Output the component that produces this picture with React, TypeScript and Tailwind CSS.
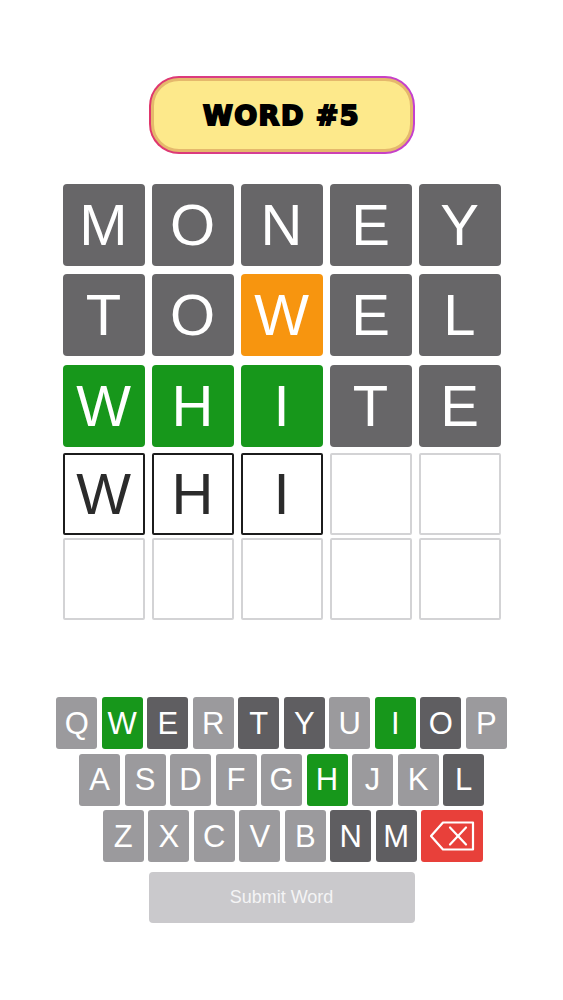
import React from 'react';

type TileState = 'gray' | 'orange' | 'green' | 'typed' | 'empty';
type KeyState = 'light' | 'dark' | 'green';

const board: { letter: string; state: TileState }[][] = [
  [
    { letter: 'M', state: 'gray' },
    { letter: 'O', state: 'gray' },
    { letter: 'N', state: 'gray' },
    { letter: 'E', state: 'gray' },
    { letter: 'Y', state: 'gray' },
  ],
  [
    { letter: 'T', state: 'gray' },
    { letter: 'O', state: 'gray' },
    { letter: 'W', state: 'orange' },
    { letter: 'E', state: 'gray' },
    { letter: 'L', state: 'gray' },
  ],
  [
    { letter: 'W', state: 'green' },
    { letter: 'H', state: 'green' },
    { letter: 'I', state: 'green' },
    { letter: 'T', state: 'gray' },
    { letter: 'E', state: 'gray' },
  ],
  [
    { letter: 'W', state: 'typed' },
    { letter: 'H', state: 'typed' },
    { letter: 'I', state: 'typed' },
    { letter: '', state: 'empty' },
    { letter: '', state: 'empty' },
  ],
  [
    { letter: '', state: 'empty' },
    { letter: '', state: 'empty' },
    { letter: '', state: 'empty' },
    { letter: '', state: 'empty' },
    { letter: '', state: 'empty' },
  ],
];

// row offsets copied from the screenshot, the gaps aren't even
const rowMargins = ['mt-0', 'mt-[8px]', 'mt-[9px]', 'mt-[6px]', 'mt-[3px]'];

const tileClass: Record<TileState, string> = {
  gray: 'bg-[#676668] text-white rounded-[4px]',
  orange: 'bg-[#f7950f] text-white rounded-[4px]',
  green: 'bg-[#17971b] text-white rounded-[4px]',
  typed: 'bg-white text-[#2b2b2b] border-2 border-[#1c1c1c] rounded-[2px]',
  empty: 'bg-white border-2 border-[#d3d3d5] rounded-[2px]',
};

const keyRows: [string, KeyState][][] = [
  [
    ['Q', 'light'],
    ['W', 'green'],
    ['E', 'dark'],
    ['R', 'light'],
    ['T', 'dark'],
    ['Y', 'dark'],
    ['U', 'light'],
    ['I', 'green'],
    ['O', 'dark'],
    ['P', 'light'],
  ],
  [
    ['A', 'light'],
    ['S', 'light'],
    ['D', 'light'],
    ['F', 'light'],
    ['G', 'light'],
    ['H', 'green'],
    ['J', 'light'],
    ['K', 'light'],
    ['L', 'dark'],
  ],
  [
    ['Z', 'light'],
    ['X', 'light'],
    ['C', 'light'],
    ['V', 'light'],
    ['B', 'light'],
    ['N', 'dark'],
    ['M', 'dark'],
  ],
];

const keyClass: Record<KeyState, string> = {
  light: 'bg-[#9b9a9d]',
  dark: 'bg-[#5f5e61]',
  green: 'bg-[#17971b]',
};

function Key({ label, state }: { label: string; state: KeyState }) {
  return (
    <div
      className={`flex h-[52px] w-[41px] items-center justify-center rounded-[3px] text-[31px] leading-none text-white ${keyClass[state]}`}
    >
      {label}
    </div>
  );
}

function BackspaceKey() {
  return (
    <div className="flex h-[52px] w-[62px] items-center justify-center rounded-[3px] bg-[#e8403a]">
      <svg width="46" height="30" viewBox="0 0 46 30" fill="none" stroke="white" strokeWidth="2.2" strokeLinejoin="round">
        <polygon points="14,1.5 44,1.5 44,28.5 14,28.5 2,15" />
        <line x1="21" y1="6.5" x2="37" y2="23.5" strokeLinecap="round" />
        <line x1="37" y1="6.5" x2="21" y2="23.5" strokeLinecap="round" />
      </svg>
    </div>
  );
}

export default function App() {
  return (
    <div className="min-h-[1000px] w-full bg-white pt-[76px] font-['Liberation_Sans',Arial,sans-serif]">
      {/* title badge */}
      <div className="flex justify-center">
        <div className="h-[78px] w-[266px] rounded-[30px] bg-gradient-to-r from-[#e0366b] to-[#c43fd0] p-[2px]">
          <div className="flex h-full w-full items-center justify-center rounded-[28px] border-[3px] border-[#e5b86c] bg-[#fde98b]">
            <span className="font-['DejaVu_Sans',sans-serif] text-[27px] font-black leading-none tracking-[1.5px] text-black [-webkit-text-stroke:2px_black]">
              WORD #5
            </span>
          </div>
        </div>
      </div>

      {/* board */}
      <div className="mt-[30px] flex flex-col items-center">
        {board.map((row, r) => (
          <div key={r} className={`flex gap-[7px] ${rowMargins[r]}`}>
            {row.map((tile, c) => (
              <div
                key={c}
                className={`flex h-[82px] w-[82px] items-center justify-center text-[58px] leading-none ${tileClass[tile.state]}`}
              >
                {tile.letter}
              </div>
            ))}
          </div>
        ))}
      </div>

      {/* keyboard */}
      <div className="mt-[77px] flex flex-col items-center gap-[4.5px]">
        <div className="flex gap-[4.5px]">
          {keyRows[0].map(([l, s]) => (
            <Key key={l} label={l} state={s} />
          ))}
        </div>
        <div className="flex gap-[4.5px]">
          {keyRows[1].map(([l, s]) => (
            <Key key={l} label={l} state={s} />
          ))}
        </div>
        <div className="flex gap-[4.5px] pl-[23px]">
          {keyRows[2].map(([l, s]) => (
            <Key key={l} label={l} state={s} />
          ))}
          <BackspaceKey />
        </div>
      </div>

      <div className="mt-[10px] flex justify-center">
        <button
          type="button"
          disabled
          className="h-[51px] w-[266px] rounded-[4px] bg-[#cac9cc] text-[18px] text-[#f4f4f5]"
        >
          Submit Word
        </button>
      </div>
    </div>
  );
}
